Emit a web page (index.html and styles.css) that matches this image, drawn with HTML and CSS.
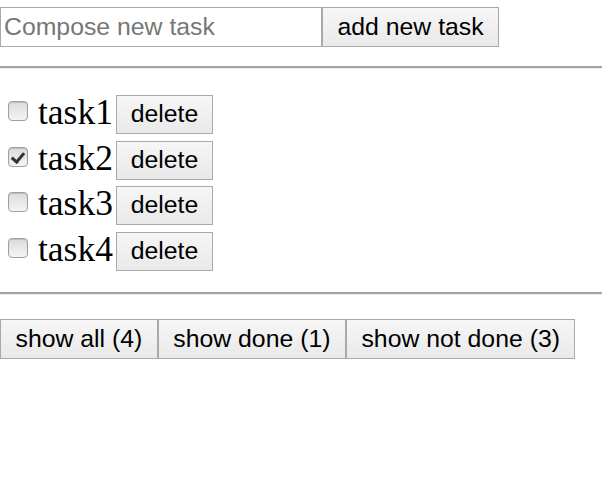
FILE: index.html
```html
<!DOCTYPE html>
<html>
<head>
<meta charset="utf-8">
<link rel="stylesheet" href="styles.css">
</head>
<body>
<div class="compose">
  <input class="compose-input" type="text" placeholder="Compose new task">
  <button class="btn">add new task</button>
</div>
<hr class="rule rule-top">
<ul class="tasks">
  <li class="task"><input class="check" type="checkbox"><span class="task-name">task1</span><button class="btn btn-delete">delete</button></li>
  <li class="task"><input class="check" type="checkbox" checked><span class="task-name">task2</span><button class="btn btn-delete">delete</button></li>
  <li class="task"><input class="check" type="checkbox"><span class="task-name">task3</span><button class="btn btn-delete">delete</button></li>
  <li class="task"><input class="check" type="checkbox"><span class="task-name">task4</span><button class="btn btn-delete">delete</button></li>
</ul>
<hr class="rule rule-bottom">
<div class="filters">
  <button class="btn">show all (4)</button><button class="btn">show done (1)</button><button class="btn">show not done (3)</button>
</div>
</body>
</html>
```
FILE: styles.css
```css
html, body {
  margin: 0;
  padding: 0;
  background: #fff;
}
body {
  font-family: "Liberation Serif", serif;
  color: #000;
}
.compose {
  display: flex;
  margin-top: 7px;
}
.compose-input {
  box-sizing: border-box;
  width: 322px;
  height: 40px;
  margin: 0;
  padding: 0 3px;
  border: 1px solid #a9a9a9;
  font-family: "Liberation Sans", Arial, sans-serif;
  font-size: 24.8px;
  color: #000;
  outline: none;
}
.compose-input::placeholder {
  color: #767676;
}
.btn {
  box-sizing: border-box;
  height: 40px;
  margin: 0;
  padding: 0 14.5px;
  border: 1px solid #a9a9a9;
  border-radius: 0;
  background: linear-gradient(#f6f6f6, #e9e9e9);
  font-family: "Liberation Sans", Arial, sans-serif;
  font-size: 24.8px;
  color: #000;
  line-height: 1;
}
.rule {
  height: 0;
  margin: 0;
  border: 0;
  border-top: 2px solid #a4a4a4;
  border-bottom: 1px solid #ececec;
}
.rule-top {
  margin-top: 19px;
}
.tasks {
  list-style: none;
  margin: 26px 0 0;
  padding: 0;
}
.task {
  display: flex;
  align-items: baseline;
  height: 45.6px;
}
.check {
  appearance: none;
  -webkit-appearance: none;
  box-sizing: border-box;
  width: 20px;
  height: 20px;
  margin: 0 10px 0 8px;
  align-self: flex-start;
  margin-top: 6px;
  border: 1px solid #a0a0a0;
  border-radius: 4px;
  background: linear-gradient(#dcdcdc, #f4f4f4);
  box-shadow: inset 0 1px 1px rgba(0,0,0,0.15);
  position: relative;
}
.check:checked::after {
  content: "";
  position: absolute;
  left: 5px;
  top: 2px;
  width: 5px;
  height: 10px;
  border: solid #333;
  border-width: 0 3px 3px 0;
  transform: rotate(40deg);
}
.task-name {
  font-size: 35.5px;
  line-height: 1;
}
.btn-delete {
  margin-left: 3px;
  height: 39px;
  align-self: flex-start;
  margin-top: 0;
  width: 97px;
  padding: 0;
}
.rule-bottom {
  margin-top: 15px;
}
.filters {
  display: flex;
  margin-top: 24px;
}
```
